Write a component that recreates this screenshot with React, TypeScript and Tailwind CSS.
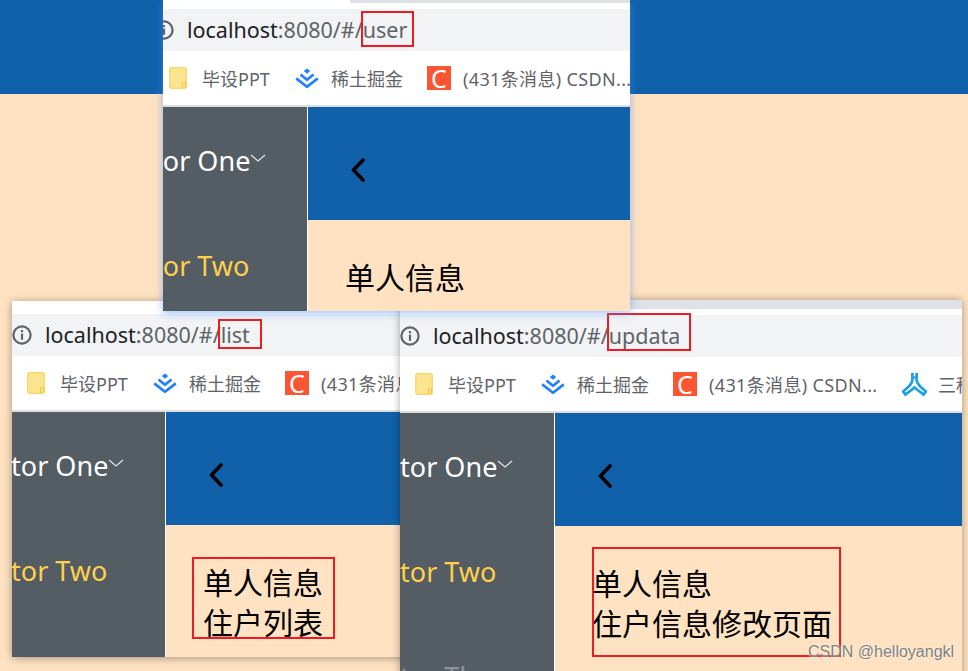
import React from "react";

const FONT = "font-['Noto_Sans','Noto_Sans_CJK_SC',sans-serif]";

function Info() {
  return (
    <svg width="20" height="20" viewBox="0 0 20 20" fill="none" className="shrink-0">
      <circle cx="10" cy="10" r="8.6" stroke="#5f6368" strokeWidth="2.2" />
      <rect x="8.9" y="5" width="2.2" height="2.2" fill="#5f6368" />
      <rect x="8.9" y="8.6" width="2.2" height="6.2" fill="#5f6368" />
    </svg>
  );
}

function Folder() {
  return (
    <svg width="18" height="22" viewBox="0 0 18 22" className="shrink-0">
      <rect x="0.8" y="0.8" width="16.4" height="20.4" rx="1.5" fill="#fde48e" stroke="#f9d86c" strokeWidth="1.5" />
      <path d="M13.5 21v-4.2a1.5 1.5 0 0 1 3 0V21" fill="none" stroke="#f2c84b" strokeWidth="1.1" />
    </svg>
  );
}

function Juejin() {
  return (
    <svg width="24" height="20" viewBox="0 0 24 20" className="shrink-0">
      <path d="M12 0.5l3.2 2.6L12 5.7 8.8 3.1z" fill="#1e80ff" />
      <path d="M5.5 6.6L12 11.8l6.5-5.2" fill="none" stroke="#1e80ff" strokeWidth="2.6" />
      <path d="M1.2 10.4L12 18.8l10.8-8.4" fill="none" stroke="#1e80ff" strokeWidth="2.6" />
    </svg>
  );
}

function Csdn() {
  return (
    <div className="w-6 h-6 bg-[#fc5531] text-white shrink-0 flex items-center justify-center text-[25px] leading-6 font-['Noto_Sans',sans-serif]">
      C
    </div>
  );
}

function Yuque() {
  return (
    <svg width="25" height="25" viewBox="0 0 25 25" fill="none" className="shrink-0">
      <path
        d="M10.4 1v6.5c0 3-1.8 5-3.6 7L1.2 19.6l2.2 3 6-4.6 3.1-2.6 3.1 2.6 6 4.6 2.2-3-5.6-5.1c-1.8-2-3.6-4-3.6-7V1"
        stroke="#1c9fe3"
        strokeWidth="2.7"
      />
      <path d="M10 5.5h5" stroke="#1c9fe3" strokeWidth="2.2" />
    </svg>
  );
}

function Chevron() {
  return (
    <svg width="14" height="24" viewBox="0 0 14 24" fill="none">
      <path d="M12 2L2.5 12 12 22" stroke="#000" strokeWidth="3.6" strokeLinecap="round" strokeLinejoin="round" />
    </svg>
  );
}

function BrowserWindow({
  frame,
  chrome,
  shift,
  navShift,
  sideWidth,
  path,
  lines,
  box,
  contentBox,
  shadow,
  showThird,
}: {
  frame: string;
  chrome: React.ReactNode;
  shift: string;
  navShift: string;
  sideWidth: string;
  path: string;
  lines: string[];
  box: string;
  contentBox?: string;
  shadow: string;
  showThird?: boolean;
}) {
  return (
    <section className={`absolute overflow-hidden flex flex-col bg-white ${FONT} ${frame} ${shadow}`}>
      {chrome}
      <div className="h-[42px] shrink-0 bg-[#f1f3f4] overflow-hidden">
        <div className={`flex items-center h-full gap-[13px] ${shift}`}>
          <Info />
          <div className="text-[21.5px] leading-[40px] whitespace-nowrap text-[#5f6368]">
            <span className="text-[#202124]">localhost</span>:8080/#/{path}
          </div>
        </div>
      </div>
      <div className="h-[54px] shrink-0 bg-white overflow-hidden">
        <div className={`flex items-center h-full whitespace-nowrap text-[18px] text-[#5f6368] ${shift}`}>
          <div className="ml-[15px] w-[18px] shrink-0"><Folder /></div>
          <span className="ml-[15px] w-[68px] shrink-0 pt-0.5">毕设PPT</span>
          <div className="ml-[25px]"><Juejin /></div>
          <span className="ml-3 w-[72px] shrink-0 pt-0.5">稀土掘金</span>
          <div className="ml-6"><Csdn /></div>
          <span className="ml-3 w-[168px] shrink-0 pt-0.5 tracking-[0.35px]">(431条消息) CSDN...</span>
          <div className="ml-[25px]"><Yuque /></div>
          <span className="ml-[11px] pt-0.5">三种方式</span>
        </div>
      </div>
      <div className="h-0.5 shrink-0 bg-[#dddddd]" />
      <div className="flex-1 min-h-0 flex">
        <aside className={`shrink-0 bg-[#545c64] overflow-hidden text-[27px] ${sideWidth}`}>
          <div className={`flex flex-col whitespace-nowrap pt-0.5 ${navShift}`}>
            <div className="h-[105px] flex items-center text-white">
              <span>Navigator One</span>
              <svg width="16" height="10" viewBox="0 0 16 10" fill="none" className="-mt-2">
                <path d="M1 2l7 6 7-6" stroke="#e8eaec" strokeWidth="1.1" />
              </svg>
            </div>
            <div className="h-[105px] flex items-center text-[#ffd04b]">Navigator Two</div>
            {showThird && <div className="h-[105px] flex items-center text-[#8f959b]">Navigator Three</div>}
          </div>
        </aside>
        <main className="ml-px flex-1 min-w-0 flex flex-col">
          <div className="h-[113px] shrink-0 bg-[#1061aa] pl-[43px] pt-3 flex items-center">
            <Chevron />
          </div>
          <div className="flex-1 bg-[#fee2c1] pl-[37px] pt-[38px] text-[30px] leading-10 text-black whitespace-nowrap">
            {lines.map((l) => (
              <div key={l}>{l}</div>
            ))}
          </div>
        </main>
      </div>
      <div className={`absolute border-2 border-[#ed1c24] ${box}`} />
      {contentBox && <div className={`absolute border-2 border-[#ed1c24] ${contentBox}`} />}
    </section>
  );
}

export default function App() {
  return (
    <div className="relative w-[968px] h-[671px] overflow-hidden bg-[#fee2c1]">
      <div className="h-[94px] bg-[#1061aa]" />

      <BrowserWindow
        frame="left-3 top-[301px] w-[400px] h-[356px]"
        shadow="shadow-[0_1px_8px_rgba(0,0,0,0.35)]"
        chrome={<div className="h-[13px] shrink-0 bg-white" />}
        shift="ml-0"
        navShift="-ml-[89px]"
        sideWidth="w-[153px]"
        path="list"
        lines={["单人信息", "住户列表"]}
        box="left-[206px] top-[18px] w-[44px] h-[30px]"
        contentBox="left-[180px] top-[256px] w-[143px] h-[82px]"
      />

      <BrowserWindow
        frame="left-[400px] top-[300px] w-[562px] h-[400px]"
        shadow="shadow-[0_0_8px_rgba(0,0,0,0.35)]"
        chrome={
          <div className="shrink-0">
            <div className="h-[9px] bg-[#dee1e6]" />
            <div className="h-[6px] bg-white" />
          </div>
        }
        shift="ml-0"
        navShift="-ml-[88px]"
        sideWidth="w-[154px]"
        path="updata"
        lines={["单人信息", "住户信息修改页面"]}
        box="left-[207px] top-[13px] w-[84px] h-[38px]"
        contentBox="left-[192px] top-[247px] w-[249px] h-[110px]"
        showThird
      />

      <BrowserWindow
        frame="left-[163px] top-0 w-[467px] h-[311px]"
        shadow="shadow-[0_2px_8px_rgba(70,140,255,0.55)]"
        chrome={
          <div className="shrink-0">
            <div className="h-[3px] flex bg-white">
              <div className="ml-[187px] flex-1 bg-[#dee1e6]" />
            </div>
            <div className="h-[6px] bg-white" />
          </div>
        }
        shift="-ml-[9px]"
        navShift="-ml-[98px]"
        sideWidth="w-[144px]"
        path="user"
        lines={["单人信息"]}
        box="left-[198px] top-[11px] w-[53px] h-9"
      />

      <div className="absolute left-[808px] top-[642px] text-[16px] leading-5 whitespace-nowrap text-[#808080] [text-shadow:0_0_2px_#ffffff] font-['Liberation_Sans',sans-serif]">
        CSDN @helloyangkl
      </div>
    </div>
  );
}
